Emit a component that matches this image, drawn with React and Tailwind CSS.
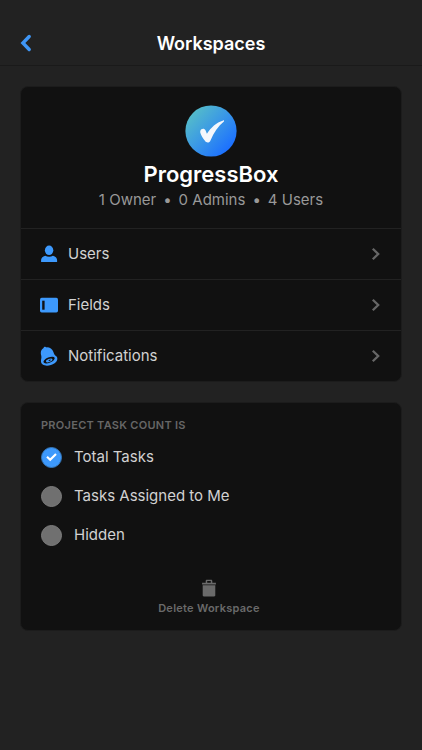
import { useState } from "react";

function BackIcon() {
  return (
    <svg width="12" height="18" viewBox="0 0 12 18" fill="none" stroke="#3f96f5" strokeWidth="3.4" strokeLinecap="round" strokeLinejoin="miter" aria-hidden="true">
      <path d="M9.2 2.500 2.900 9l6.300 6.500" />
    </svg>
  );
}

function ChevronIcon() {
  return (
    <svg width="10" height="14" viewBox="0 0 10 14" fill="none" stroke="#666666" strokeWidth="2.3" aria-hidden="true">
      <path d="M1.800 1.700 7.200 7l-5.400 5.300" />
    </svg>
  );
}

function UserIcon() {
  return (
    <svg width="18" height="18" viewBox="0 0 18 18" fill="#3d99fc" aria-hidden="true">
      <ellipse cx="9.1" cy="5.3" rx="4.2" ry="4.8" />
      <path d="M1 16.2c0-3.4 1.5-4.9 4.3-5.5 1.1.7 2.3 1.1 3.8 1.1s2.700-.4 3.800-1.100c2.800.6 4.300 2.100 4.300 5.500 0 .6-.3.900-.9.900H1.900c-.6 0-.9-.3-.9-.9Z" />
    </svg>
  );
}

function FieldsIcon() {
  return (
    <svg width="18" height="18" viewBox="0 0 18 18" aria-hidden="true">
      <rect x="0" y="1.700" width="18" height="14.800" rx="1.700" fill="#3d99fc" />
      <rect x="2.200" y="4.700" width="2.400" height="9" fill="#111111" />
    </svg>
  );
}

function BellIcon() {
  return (
    <svg width="18" height="20" viewBox="0 0 18 20" aria-hidden="true">
      <path fill="#3d99fc" d="M3.600 2.100C3.500.9 5.700.3 6.200 1.400c3.100-.3 6.200 1.300 7.200 4.600.5 1.900 1.300 3.100 2.900 4.300 1.900 1.700 1.100 5-1.700 7-3.600 2.600-9.200 3.200-11.900 1.300C.9 17.100.8 15.300 1.100 13.500c.4-1.900.4-2.900 0-4.600C.3 6.200 1.100 3.600 3.600 2.100Z" />
      <ellipse cx="9.100" cy="14.100" rx="6" ry="2.700" transform="rotate(-22 9.100 14.100)" fill="#111111" />
      <ellipse cx="9.200" cy="14.400" rx="3.400" ry="1.500" transform="rotate(-22 9.200 14.400)" fill="#3d99fc" />
      <ellipse cx="9.700" cy="14.300" rx="1.200" ry="0.600" transform="rotate(-22 9.700 14.300)" fill="#111111" />
    </svg>
  );
}

function TrashIcon() {
  return (
    <svg width="16" height="18" viewBox="0 0 16 18" fill="#6a6a6a" aria-hidden="true">
      <path fillRule="evenodd" d="M4.700 3.700V1.900c0-.7.500-1.200 1.200-1.200h4.200c.7 0 1.200.5 1.200 1.200v1.800h3.600v1.800H1.100V3.700h3.600Zm1.500 0h3.600V2.100H6.200v1.600Z" />
      <path d="M1.700 6.300h12.600v10c0 .7-.4 1.100-1.100 1.100H2.800c-.7 0-1.100-.4-1.100-1.100v-10Z" />
    </svg>
  );
}

function WorkspaceLogo() {
  return (
    <svg width="52" height="52" viewBox="0 0 52 52" aria-hidden="true">
      <defs>
        <linearGradient id="logo-fill" x1="0.1" y1="0.15" x2="0.85" y2="0.85">
          <stop offset="0" stopColor="#55bdc9" />
          <stop offset="0.500" stopColor="#3a98e6" />
          <stop offset="1" stopColor="#1c70ff" />
        </linearGradient>
      </defs>
      <circle cx="26" cy="26" r="25.600" fill="url(#logo-fill)" />
      <path fill="#f4f7fc" d="M15.300 26c.6-2.600 4.200-3.100 5.300-.6l1.300 3.300c4.100-6.300 9.300-11.100 16.300-13.300.8-.2 1.200.6.7 1.100-5.700 4.600-10.200 10.900-13.300 18.700-.8 2.700-4 3.200-5.500.9-2.300-2.900-3.800-5.300-4.700-8.200-.2-.7-.3-1.300-.1-1.900Z" />
    </svg>
  );
}

const links = [
  { label: "Users", Icon: UserIcon },
  { label: "Fields", Icon: FieldsIcon },
  { label: "Notifications", Icon: BellIcon },
];

const options = ["Total Tasks", "Tasks Assigned to Me", "Hidden"];

export default function App() {
  const [selected, setSelected] = useState("Total Tasks");
  return (
    <div className="min-h-screen bg-[#222222] font-['Inter',sans-serif] text-[#d2d2d2]">
      <header className="grid grid-cols-[40px_1fr_40px] items-center border-b border-[#1a1a1a] px-5 pt-5">
        <button type="button" aria-label="Back" className="flex h-[45px] items-center">
          <BackIcon />
        </button>
        <h1 className="pt-0.5 text-center text-lg font-semibold text-white">Workspaces</h1>
      </header>

      <main className="flex flex-col gap-5 px-5 py-5">
        <section className="overflow-hidden rounded-lg border border-[#1c1c1c] bg-[#111111]">
          <div className="flex flex-col items-center pt-[18px] pb-4">
            <WorkspaceLogo />
            <h2 className="mt-[3px] text-[22px] leading-7 font-semibold text-white">ProgressBox</h2>
            <p className="flex gap-[7px] text-[15px] leading-6 text-[#999999]">
              <span>1 Owner</span>
              <span>•</span>
              <span>0 Admins</span>
              <span>•</span>
              <span>4 Users</span>
            </p>
          </div>
          <nav>
            {links.map(({ label, Icon }) => (
              <a key={label} href="#" className="flex h-[51px] items-center gap-2 border-t border-[#222222] pr-5 pl-[19px] text-[15px]">
                <span className="flex w-5 justify-start">
                  <Icon />
                </span>
                <span className="flex-1">{label}</span>
                <ChevronIcon />
              </a>
            ))}
          </nav>
        </section>

        <section className="rounded-lg border border-[#1c1c1c] bg-[#111111] px-5 py-3.5">
          <fieldset>
            <legend className="text-[11px] leading-4 font-semibold tracking-wide text-[#666666]">PROJECT TASK COUNT IS</legend>
            <div className="mt-3 flex flex-col gap-[15px]">
              {options.map((option) => (
                <label key={option} className="flex h-6 items-center gap-3 text-[15px]">
                  <span className="grid place-items-center">
                    <input
                      type="radio"
                      name="task-count"
                      checked={selected === option}
                      onChange={() => setSelected(option)}
                      className="col-start-1 row-start-1 size-[21px] appearance-none rounded-full border border-[#7d7d7d] bg-[#707070] checked:border-[#3577ba] checked:bg-[#3d99fc]"
                    />
                    {selected === option && (
                      <svg width="11" height="10" viewBox="0 0 11 10" fill="none" stroke="#ffffff" strokeWidth="2.200" className="pointer-events-none col-start-1 row-start-1" aria-hidden="true">
                        <path d="M1 4.800 4.200 7.800 10 2" />
                      </svg>
                    )}
                  </span>
                  {option}
                </label>
              ))}
            </div>
          </fieldset>
          <div className="mt-8 flex justify-center pr-1">
            <button type="button" className="flex flex-col items-center gap-[3px] text-[11px] leading-4 font-semibold tracking-wide text-[#6a6a6a]">
              <TrashIcon />
              Delete Workspace
            </button>
          </div>
        </section>
      </main>
    </div>
  );
}
